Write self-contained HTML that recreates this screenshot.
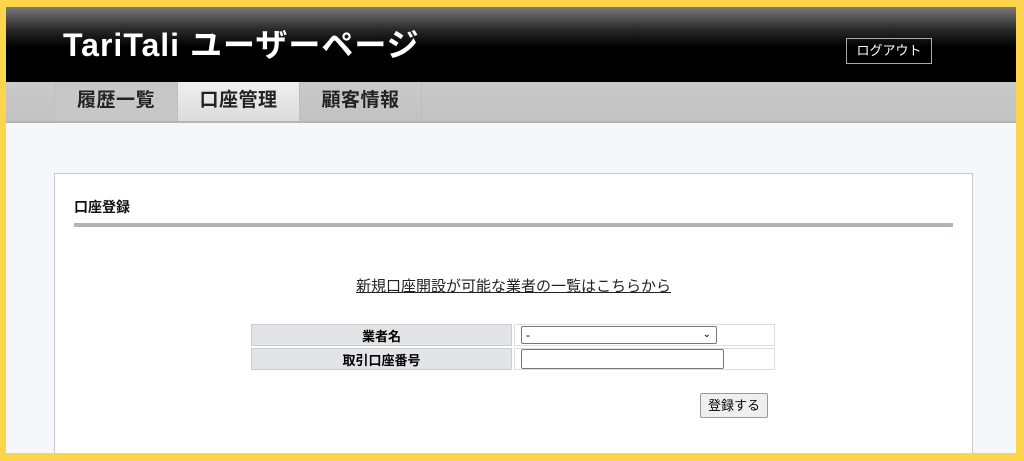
<!DOCTYPE html>
<html><head><meta charset="utf-8"><style>
*{margin:0;padding:0;box-sizing:border-box}
body{width:1024px;height:461px;background:#fdd54a;position:relative;overflow:hidden;font-family:"Liberation Sans","Noto Sans CJK JP",sans-serif}
#app{position:absolute;left:6px;top:7px;width:1010px;height:446px;background:#f6f7fb;overflow:hidden}
#hd{position:absolute;left:0;top:0;width:100%;height:75px;background:linear-gradient(#7a7a7a 0,#2a2a2a 22px,#000 40px,#000 100%)}
#hd h1{position:absolute;left:57px;top:13px;color:#fff;font-size:32px;font-weight:bold;letter-spacing:1px}
#lo{position:absolute;left:840px;top:31px;width:86px;height:26px;border:1px solid #aaa;color:#fff;font-size:13px;text-align:center;line-height:24px}
#nav{position:absolute;left:0;top:75px;width:100%;height:41px;background:linear-gradient(#cacaca,#c2c2c2);border-bottom:2px solid #b4b4b4}
.t{position:absolute;top:0;height:39px;line-height:38px;font-size:19px;font-weight:bold;color:#222;text-align:center;border-left:1px solid #bdbdbd;letter-spacing:0.5px}
#pn{position:absolute;left:48px;top:166px;width:919px;height:300px;background:#fff;border:1px solid #c6c9ce}
#pn h2{position:absolute;left:19px;top:23px;font-size:14px;font-weight:bold;color:#111}
#rule{position:absolute;left:19px;top:49px;width:879px;height:4px;background:#b1b5ba}
#lk{position:absolute;left:0;width:100%;top:101px;text-align:center;font-size:15px;color:#222;text-decoration:underline}
table{position:absolute;left:194px;top:148px;border-collapse:separate;border-spacing:2px;width:528px}
td{height:22px;font-size:13px}
td.l{background:#e3e4e8;border:1px solid #ccc;width:261px;text-align:center;font-weight:bold}
td.r{border:1px solid #ddd;padding-left:6px}
.sel{width:196px;height:18px;border:1px solid #777;border-radius:2px;font-size:12px;line-height:16px;padding-left:4px;position:relative}
.inp{width:203px;height:20px;border:1px solid #777;border-radius:2px}
#btn{position:absolute;left:645px;top:219px;width:68px;height:25px;border:1px solid #999;background:#efefef;font-size:13px;text-align:center;line-height:23px;border-radius:2px}
</style></head><body>
<div id="app">
<div id="hd"><h1>TariTali ユーザーページ</h1><div id="lo">ログアウト</div></div>
<div id="nav">
<div class="t" style="left:48px;width:123px;background:#c7c7c7">履歴一覧</div>
<div class="t" style="left:171px;width:122px;background:linear-gradient(#efefef,#dcdcdc)">口座管理</div>
<div class="t" style="left:293px;width:123px;border-right:1px solid #bdbdbd">顧客情報</div>
</div>
<div id="pn">
<h2>口座登録</h2><div id="rule"></div>
<div id="lk">新規口座開設が可能な業者の一覧はこちらから</div>
<table>
<tr><td class="l">業者名</td><td class="r"><div class="sel">-<span style="position:absolute;right:5px;top:0;font-size:10px">&#8964;</span></div></td></tr>
<tr><td class="l">取引口座番号</td><td class="r"><div class="inp"></div></td></tr>
</table>
<div id="btn">登録する</div>
</div>
</div>
</body></html>
